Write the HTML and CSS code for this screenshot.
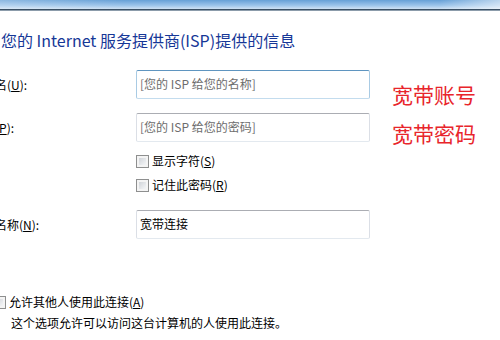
FILE: index.html
```html
<!DOCTYPE html>
<html lang="zh-CN">
<head>
    <meta charset="UTF-8">
    <meta name="viewport" content="width=device-width, initial-scale=1.0">
    <title>连接到 Internet</title>
    <link rel="stylesheet" href="styles.css">
</head>
<body>

    <!-- Barra de título (vidro do Windows 7) -->
    <div class="titlebar"></div>

    <div class="dialog">
        <h1 class="heading">您的 Internet 服务提供商(ISP)提供的信息</h1>

        <div class="form">
            <div class="row">
                <label class="label" for="userName">用户名(<u>U</u>):</label>
                <input type="text" id="userName" class="textbox textbox-hover" placeholder="[您的 ISP 给您的名称]">
                <span class="note">宽带账号</span>
            </div>

            <div class="row row-pass">
                <label class="label" for="password">密码(<u>P</u>):</label>
                <input type="text" id="password" class="textbox" placeholder="[您的 ISP 给您的密码]">
                <span class="note note-pass">宽带密码</span>
            </div>

            <div class="row row-check1">
                <label class="check-label indent">
                    <input type="checkbox" class="check">
                    <span>显示字符(<u>S</u>)</span>
                </label>
            </div>

            <div class="row row-check2">
                <label class="check-label indent">
                    <input type="checkbox" class="check">
                    <span>记住此密码(<u>R</u>)</span>
                </label>
            </div>

            <div class="row row-name">
                <label class="label" for="connName">连接名称(<u>N</u>):</label>
                <input type="text" id="connName" class="textbox textbox-value" value="宽带连接">
            </div>

            <div class="row row-share">
                <label class="check-label share">
                    <input type="checkbox" class="check">
                    <span>允许其他人使用此连接(<u>A</u>)</span>
                </label>
            </div>
            <p class="hint">这个选项允许可以访问这台计算机的人使用此连接。</p>
        </div>
    </div>

</body>
</html>
```

FILE: styles.css
```css
body {
    margin: 0;
    width: 500px;
    height: 340px;
    overflow: hidden;
    background-color: #fff;
    font-family: "Noto Sans CJK SC", "Noto Sans", sans-serif;
    font-size: 12px;
    color: #000;
}

.titlebar {
    height: 9px;
    border-bottom: 1px solid #3b5064;
    box-shadow: 0 1px 0 #8c9cab;
    background:
        linear-gradient(to right, rgba(255, 255, 255, 0.25), rgba(255, 255, 255, 0) 25%, rgba(255, 255, 255, 0) 88%, rgba(255, 255, 255, 0.55)),
        linear-gradient(to bottom, #66a0d6, #9cc4ea 60%, #cfe2f4);
}

.heading {
    margin: 20px 0 0 1px;
    font-size: 16px;
    font-weight: normal;
    line-height: 20px;
    color: #163797;
}

.form {
    margin-left: -29px; /* a janela está cortada à esquerda */
    margin-top: 20px;
}

.row {
    display: flex;
    align-items: center;
}

.label {
    width: 165px;
    flex: none;
    line-height: 16px;
}

.textbox {
    box-sizing: border-box;
    width: 234px;
    height: 29px;
    margin: 0;
    padding: 0 3px 3px;
    border: 1px solid #dbdfe6;
    border-top-color: #abadb3;
    border-bottom-color: #e3e9ef;
    border-radius: 2px;
    font-family: inherit;
    font-size: 12px;
    color: #000;
    outline: none;
}

.textbox::placeholder {
    color: #6d6d6d;
}

.textbox-hover {
    border-color: #a9cbe4;
    border-top-color: #5f95c0;
    border-bottom-color: #c3dcee;
}

.note {
    box-sizing: border-box;
    height: 29px;
    padding-top: 14px;
    margin-left: 22px;
    align-self: flex-start;
    font-size: 21px;
    line-height: 20px;
    color: #e8252b;
    white-space: nowrap;
}

.note-pass {
    padding-top: 10px;
}

.row-pass {
    margin-top: 14px;
}

.row-check1 {
    margin-top: 11px;
}

.row-check2 {
    margin-top: 8px;
}

.row-name {
    margin-top: 17px;
}

.row-share {
    margin-top: 55px;
}

.check-label {
    display: flex;
    align-items: center;
    height: 16px;
    line-height: 16px;
}

.indent {
    margin-left: 165px;
}

.share {
    margin-left: 22px;
}

.check {
    appearance: none;
    -webkit-appearance: none;
    box-sizing: border-box;
    width: 13px;
    height: 13px;
    margin: 0 3px 0 0;
    border: 1px solid #8e8f8f;
    box-shadow: inset 0 0 0 2px #f4f4f4;
    background: linear-gradient(135deg, #c6cad0, #eef0f2 70%, #f8f8f8);
}

.hint {
    margin: 5px 0 0 40px;
    line-height: 16px;
}
```
